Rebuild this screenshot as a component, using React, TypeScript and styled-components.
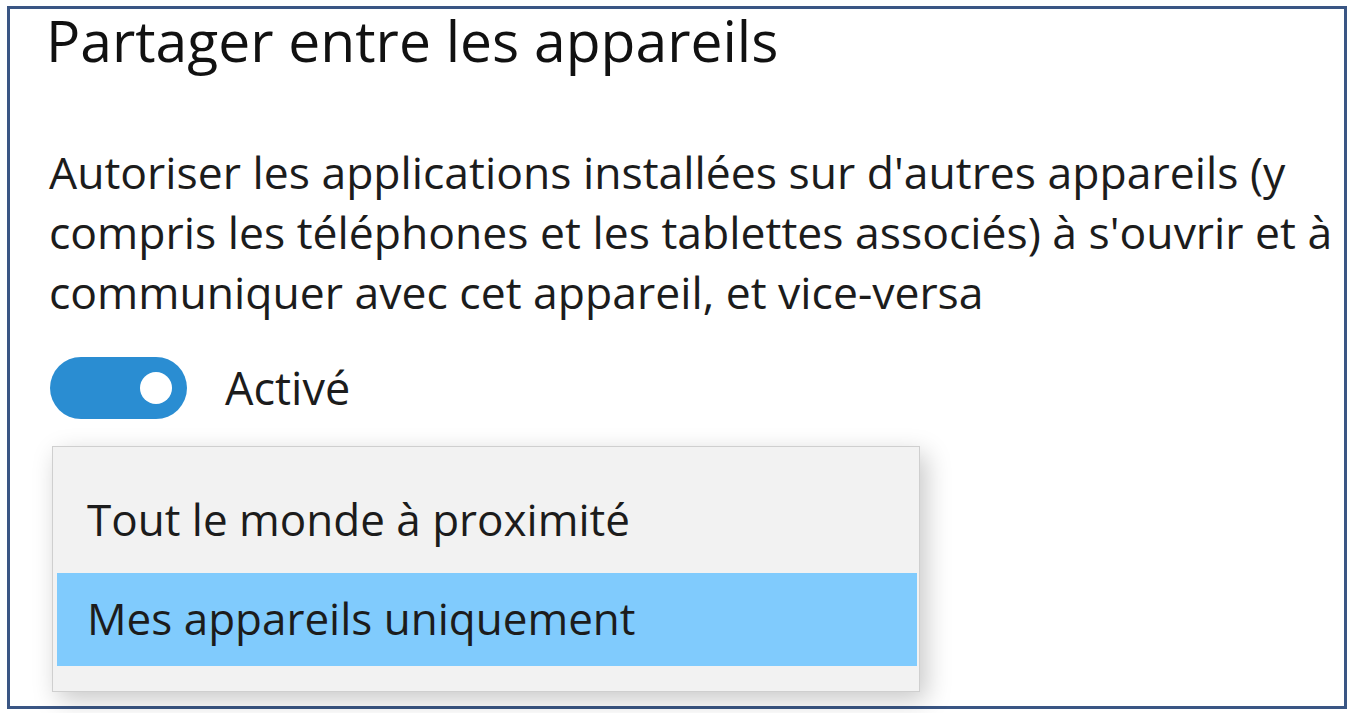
import React from "react"
import styled, { createGlobalStyle } from "styled-components"

const GlobalStyle = createGlobalStyle`
  html, body {
    margin: 0;
    padding: 0;
    background: #ffffff;
  }
  body {
    font-family: "Open Sans", "Noto Sans", sans-serif;
    color: #1a1a1a;
  }
`

const Page = styled.div`
  width: 1351px;
  height: 713px;
  padding: 6px 4px 4px 7px;
  box-sizing: border-box;
`

const Frame = styled.section`
  height: 703px;
  width: 1340px;
  box-sizing: border-box;
  border: 3px solid #3a5684;
  padding: 1px 0 0 36px;
  display: flex;
  flex-direction: column;
`

const Title = styled.h1`
  margin: 0;
  font-size: 57px;
  font-weight: 400;
  line-height: 60px;
  color: #111;
`

const Description = styled.p`
  margin: 72px 0 0 3px;
  font-size: 44.5px;
  line-height: 60px;
  white-space: nowrap;
  color: #1c1c1c;
`

const ToggleRow = styled.div`
  display: flex;
  align-items: center;
  gap: 38px;
  margin: 35px 0 0 4px;
`

const Switch = styled.div<{ on: boolean }>`
  width: 137px;
  height: 62px;
  border-radius: 31px;
  background: ${(p) => (p.on ? "#2a8dd2" : "#ffffff")};
  display: flex;
  align-items: center;
  justify-content: ${(p) => (p.on ? "flex-end" : "flex-start")};
  padding: 0 15px;
  box-sizing: border-box;
  flex-shrink: 0;
  &::after {
    content: "";
    width: 32px;
    height: 32px;
    border-radius: 50%;
    background: #ffffff;
  }
`

const SwitchLabel = styled.span`
  font-size: 45px;
  line-height: 60px;
  color: #1c1c1c;
`

const Menu = styled.ul`
  list-style: none;
  margin: 27px 0 0 6px;
  padding: 0 2px 25px 4px;
  width: 868px;
  box-sizing: border-box;
  background: #f2f2f2;
  border: 1px solid #cfcfcf;
  box-shadow: 6px 8px 24px rgba(0, 0, 0, 0.22);
`

const MenuItem = styled.li<{ selected?: boolean }>`
  height: ${(p) => (p.selected ? "93px" : "126px")};
  display: flex;
  align-items: ${(p) => (p.selected ? "center" : "flex-end")};
  padding: ${(p) => (p.selected ? "0 0 4px 30px" : "0 0 24px 30px")};
  box-sizing: border-box;
  font-size: 44px;
  line-height: 60px;
  white-space: nowrap;
  color: #1c1c1c;
  background: ${(p) => (p.selected ? "#80cbfd" : "transparent")};
`

const options = [
  { label: "Tout le monde à proximité", selected: false },
  { label: "Mes appareils uniquement", selected: true },
]

const App = () => {
  return (
    <>
      <GlobalStyle />
      <Page>
        <Frame>
          <Title>Partager entre les appareils</Title>
          <Description>
            Autoriser les applications installées sur d'autres appareils (y
            <br />
            compris les téléphones et les tablettes associés) à s'ouvrir et à
            <br />
            communiquer avec cet appareil, et vice-versa
          </Description>
          <ToggleRow>
            <Switch on={true} />
            <SwitchLabel>Activé</SwitchLabel>
          </ToggleRow>
          <Menu>
            {options.map((o) => (
              <MenuItem key={o.label} selected={o.selected}>
                {o.label}
              </MenuItem>
            ))}
          </Menu>
        </Frame>
      </Page>
    </>
  )
}

export default App
